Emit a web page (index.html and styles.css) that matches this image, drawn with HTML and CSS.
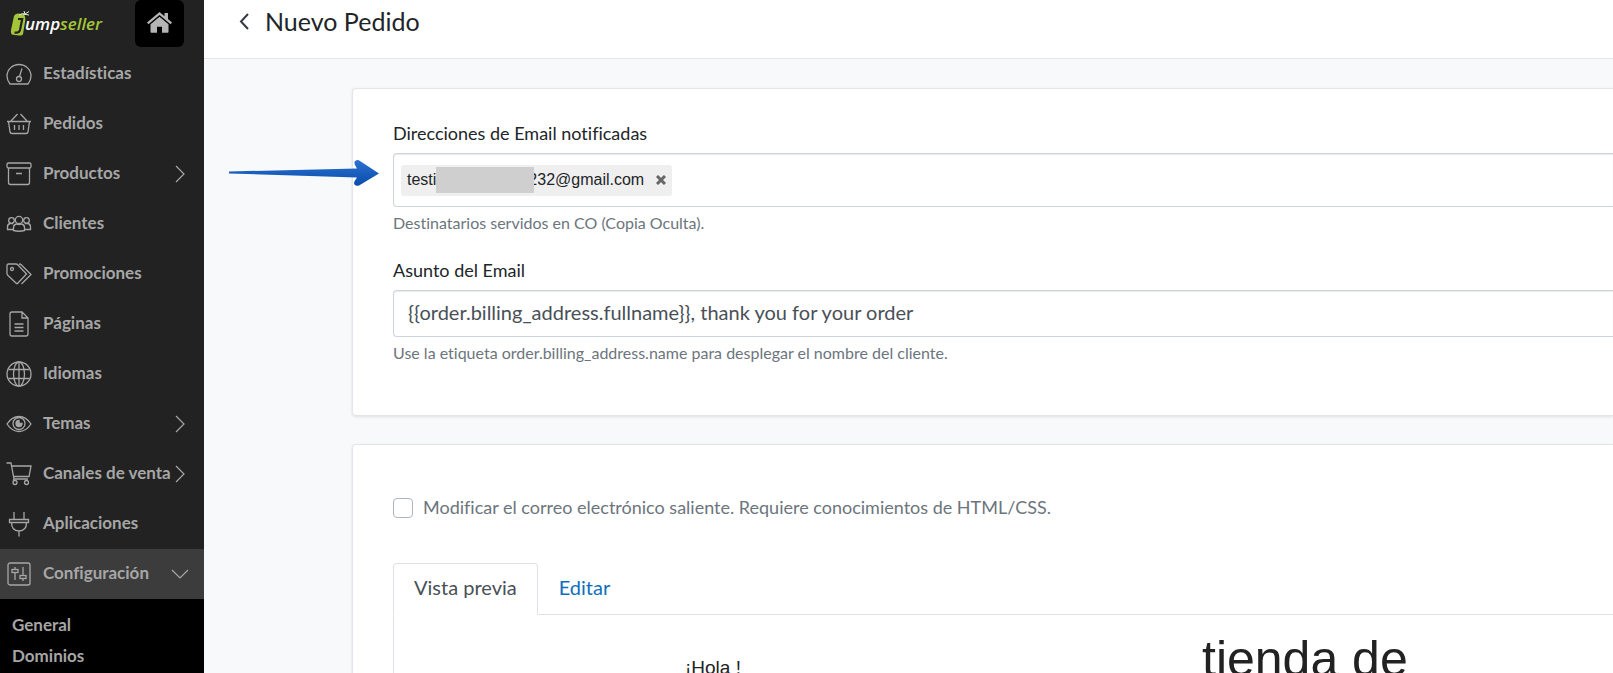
FILE: index.html
```html
<!DOCTYPE html>
<html lang="es">
<head>
<meta charset="utf-8">
<title>Nuevo Pedido</title>
<link rel="stylesheet" href="styles.css">
</head>
<body>
<div class="app">
  <aside class="sidebar">
    <div class="brand">
      <a class="logo" href="#" aria-label="jumpseller">
        <svg width="96" height="28" viewBox="0 0 96 28" aria-hidden="true">
          <path d="M4 6 Q5 3.500 8 3.500 L14 4.500 Q16 7 15 12 L13 24 Q12.500 26 9 25.500 L3 24.800 Q.5 24.500 1 20 Z" fill="#a3c639"/>
          <path d="M8 9h4.200L10 20q-1 3.500-5.500 2.500" fill="none" stroke="#222" stroke-width="2.200"/>
          <path d="M9 5q3-2 6-1l4-2.500M15 4l-1-3M13 4l6 1" fill="none" stroke="#e8efe0" stroke-width="1"/>
          <text class="logo-text" x="15" y="20"><tspan fill="#fff">ump</tspan><tspan fill="#a3c639">seller</tspan></text>
        </svg>
      </a>
      <a class="home" href="#" aria-label="Inicio">
        <svg width="25" height="21" viewBox="0 0 25 21" aria-hidden="true">
          <path d="M12.500 0 0 10.500l1.500 1.800 11-9.200 11 9.200 1.500-1.800-4-3.400V1h-3.500v3.200z"/>
          <path d="M12.500 4.800 3.500 12.300V20q0 .8.800.8h5.700v-6h5v6h5.700q.8 0 .8-.8v-7.700z"/>
        </svg>
      </a>
    </div>
    <nav class="menu">
      <a class="item" href="#"><svg class="icon" viewBox="0 0 26 26"><path d="M4 23h18q3-3.500 3-8a12 11.500 0 0 0-24 0q0 4.500 3 8zM13.500 15.500 16 7.500"/><circle cx="13" cy="18" r="2.500"/></svg><span>Estadísticas</span></a>
      <a class="item" href="#"><svg class="icon" viewBox="0 0 26 26"><path d="M1 10.500h24M2.500 10.500 4 21q.3 1.500 2 1.500h14q1.700 0 2-1.500l1.500-10.500M5 10l6.500-7M21 10l-6.500-7M8.500 14v5M13 14v5M17.500 14v5"/></svg><span>Pedidos</span></a>
      <a class="item" href="#"><svg class="icon" viewBox="0 0 26 26"><rect x="1" y="2" width="24" height="5" rx="1.500"/><path d="M2.500 7v14.500q0 2 2 2h17q2 0 2-2V7M10 12.500h6"/></svg><span>Productos</span><svg class="chevron" viewBox="0 0 18 18"><path d="m5 1 8 8-8 8"/></svg></a>
      <a class="item" href="#"><svg class="icon" viewBox="0 0 26 26"><circle cx="13" cy="9" r="3.700"/><circle cx="5.500" cy="9.500" r="2.800"/><circle cx="20.500" cy="9.500" r="2.800"/><path d="M7.500 19.500v-3q0-3 3-3.500 2.500 1 5 0 3 .5 3 3.500v3q-5.500 1.500-11 0zM7 18.500H1.500V16q0-3 2.500-3.500h3M19 18.500h5.500V16q0-3-2.500-3.500h-3"/></svg><span>Clientes</span></a>
      <a class="item" href="#"><svg class="icon" viewBox="0 0 26 26"><path d="M1 4.500q0-1.500 1.500-1.500H10q1 0 2 1l8.500 9-9 9.500q-.5.500-1 0L2 14.500q-1-1-1-2zM13 3q1.500 0 2.500 1l9.500 9.500-9.500 9.500"/><circle cx="6" cy="8" r="1.500"/></svg><span>Promociones</span></a>
      <a class="item" href="#"><svg class="icon" viewBox="0 0 26 26"><path d="M16 1H6Q4 1 4 3v20q0 2 2 2h14q2 0 2-2V7zM16 1v6h6M8.500 13h9M8.500 16.500h9M8.500 20h9"/></svg><span>Páginas</span></a>
      <a class="item" href="#"><svg class="icon" viewBox="0 0 26 26"><circle cx="13" cy="13" r="12"/><ellipse cx="13" cy="13" rx="5.500" ry="12"/><path d="M13 1v24M2.500 8.500h21M2.500 17.500h21"/></svg><span>Idiomas</span></a>
      <a class="item" href="#"><svg class="icon" viewBox="0 0 26 26"><path d="M1 13q5-7.500 12-7.500T25 13q-5 7.500-12 7.500T1 13z"/><circle cx="13" cy="12.500" r="6"/><path class="solid" d="M13 9.500a3 3 0 1 0 3 3h-3z"/></svg><span>Temas</span><svg class="chevron" viewBox="0 0 18 18"><path d="m5 1 8 8-8 8"/></svg></a>
      <a class="item" href="#"><svg class="icon" viewBox="0 0 26 26"><path d="M.5 2H5l3 16h14M6 5h19l-2 10.500H7.500M8 18l-1 1.500"/><circle cx="9" cy="21.500" r="2"/><circle cx="20.500" cy="21.500" r="2"/></svg><span>Canales de venta</span><svg class="chevron" viewBox="0 0 18 18"><path d="m5 1 8 8-8 8"/></svg></a>
      <a class="item" href="#"><svg class="icon" viewBox="0 0 26 26"><path d="M8 1v7M18 1v7M3.500 8.500h19v3h-19zM5.500 11.500q0 8.500 7.500 8.500t7.500-8.500M13 20v5.500"/></svg><span>Aplicaciones</span></a>
      <a class="item active" href="#"><svg class="icon" viewBox="0 0 26 26"><rect x="2" y="2" width="22" height="22" rx="2"/><path d="M9 6v2.500M9 12v7M17 6v8M17 18v2"/><rect x="6" y="8.500" width="6" height="3"/><rect x="14" y="14.500" width="6" height="3"/></svg><span>Configuración</span><svg class="chevron" viewBox="0 0 18 18"><path d="m1 5 8 8 8-8"/></svg></a>
    </nav>
    <nav class="submenu">
      <a href="#">General</a>
      <a href="#">Dominios</a>
    </nav>
  </aside>
  <div class="page">
    <header class="topbar">
      <button class="back" type="button" aria-label="Volver"><svg width="10" height="17" viewBox="0 0 10 17"><path d="M9 1 2 8.500 9 16"/></svg></button>
      <h1>Nuevo Pedido</h1>
    </header>
    <main class="content">
      <section class="card">
        <div class="field">
          <label for="emails">Direcciones de Email notificadas</label>
          <div class="tagbox">
            <span class="tag">testi<span class="mask"></span>232@gmail.com<button type="button" aria-label="Quitar"><svg width="10" height="10" viewBox="0 0 10 10"><path d="m1 1 8 8M9 1 1 9"/></svg></button></span>
            <input id="emails" type="text">
          </div>
          <p class="help">Destinatarios servidos en CO (Copia Oculta).</p>
          <svg class="pointer" width="152" height="28" viewBox="0 0 152 28" aria-hidden="true">
            <defs><linearGradient id="blue" x1="0" y1="0" x2="0" y2="1"><stop offset="0" stop-color="#2a72d0"/><stop offset="1" stop-color="#0a4bab"/></linearGradient></defs>
            <path d="M1 12.500 129 9.500 127 6Q125.500 2.500 128 1.500q2-1 4 .5l19 12.500L131 26.500q-3 1-4.500-1-1-2 .5-4l2-3L1 14.500z" fill="url(#blue)"/>
          </svg>
        </div>
        <div class="field">
          <label for="subject">Asunto del Email</label>
          <input class="control" id="subject" type="text" value="{{order.billing_address.fullname}}, thank you for your order">
          <p class="help">Use la etiqueta order.billing_address.name para desplegar el nombre del cliente.</p>
        </div>
      </section>
      <section class="card">
        <label class="check"><input type="checkbox"><span>Modificar el correo electrónico saliente. Requiere conocimientos de HTML/CSS.</span></label>
        <div class="tabs" role="tablist">
          <button class="tab selected" type="button" role="tab" aria-selected="true">Vista previa</button>
          <button class="tab" type="button" role="tab" aria-selected="false">Editar</button>
        </div>
        <div class="preview" role="tabpanel">
          <p class="greeting">¡Hola !</p>
          <p class="store">tienda de</p>
        </div>
      </section>
    </main>
  </div>
</div>
</body>
</html>
```
FILE: styles.css
```css
* { box-sizing: border-box; }
body { margin: 0; font-family: Lato, "Open Sans", sans-serif; font-variant-ligatures: none; color: #212529; background: #f8f9fb; }
h1, p { margin: 0; }
a { text-decoration: none; }
button { font: inherit; border: 0; background: none; padding: 0; }
svg { fill: none; flex: none; display: block; }

.app { display: flex; height: 100vh; overflow: hidden; }
.sidebar { width: 204px; flex: none; display: flex; flex-direction: column; background: #222; color: #a6a6a6; font-size: 17px; font-weight: 700; }
.brand { display: flex; justify-content: space-between; height: 49px; padding: 0 20px 0 10px; flex: none; }
.logo { padding-top: 10px; }
.logo-text { font: italic 600 17px "Open Sans", sans-serif; }
.home { display: grid; place-items: center; width: 49px; height: 47px; padding-bottom: 2px; background: #000; border-radius: 6px; }
.home svg { fill: #b5b5b5; }
.item { display: flex; align-items: center; height: 50px; padding: 0 15px 0 6px; color: inherit; }
.item span { padding: 0 0 3px 11px; white-space: nowrap; }
.item.active { background: #3c3c3c; }
.icon { width: 26px; height: 26px; stroke: currentColor; stroke-width: 1.3; }
.icon .solid { fill: currentColor; }
.chevron { width: 18px; height: 18px; margin-left: auto; stroke: currentColor; stroke-width: 1.2; }
.submenu { flex: 1; display: flex; flex-direction: column; padding: 10px 12px; background: #000; }
.submenu a { color: inherit; line-height: 31px; }

.page { flex: 1; min-width: 0; }
.topbar { display: flex; align-items: center; gap: 16px; height: 59px; padding: 0 35px 16px; background: #fff; border-bottom: 1px solid #e4e6e9; }
.back svg { stroke: #343a46; stroke-width: 2; }
h1 { font-size: 25px; font-weight: 400; }
.content { display: flex; flex-direction: column; gap: 28px; padding: 29px 0 0 148px; }
.card { padding: 31px 0 0 40px; background: #fff; border: 1px solid #e2e5e9; border-right: 0; border-radius: 4px 0 0 4px; box-shadow: 0 1px 3px rgba(0, 0, 0, .1); }
.card:first-child { padding-bottom: 51px; }
.field { position: relative; }
.field + .field { margin-top: 23px; }
.field label { display: block; margin-bottom: 7px; font-size: 18px; line-height: 26px; }
.tagbox, .control { width: 100%; border: 1px solid #ced4da; border-right: 0; border-radius: 4px 0 0 4px; background: #fff; box-shadow: inset 0 1px 1px rgba(0, 0, 0, .08); }
.tagbox { display: flex; align-items: center; height: 54px; padding: 0 7px; }
.tag { display: flex; align-items: center; height: 31px; padding: 0 6px; border-radius: 3px; background: #efefef; font-family: "Liberation Sans", Arial, sans-serif; font-size: 16px; }
.mask { width: 98px; height: 26px; margin-right: -6px; background: #cfcfcf; z-index: 1; }
.tag button { margin-left: 12px; }
.tag button svg { stroke: #666; stroke-width: 3; }
.tagbox input { flex: 1; min-width: 0; border: 0; outline: 0; background: none; }
.control { display: block; height: 47px; padding: 0 14px 4px; font-family: inherit; font-size: 20px; color: #495057; }
.help { margin-top: 5px; font-size: 16px; line-height: 22px; color: #6c757d; }
.pointer { position: absolute; left: -165px; top: 39px; }
.check { display: flex; align-items: center; gap: 10px; margin: 18px 0 41px; font-size: 18px; line-height: 26px; color: #6c757d; }
.check span { padding-bottom: 2px; }
.check input { appearance: none; width: 20px; height: 20px; margin: 0; border: 1px solid #adb5bd; border-radius: 4px; background: #fff; }
.tabs { display: flex; border-bottom: 1px solid #dee2e6; }
.tab { height: 52px; margin-bottom: -1px; padding: 0 20px 4px; border: 1px solid transparent; border-radius: 4px 4px 0 0; font-size: 20px; color: #0f6fbd; }
.tab.selected { color: #495057; background: #fff; border-color: #dee2e6 #dee2e6 #fff; }
.preview { display: grid; grid-template-columns: 517px 1fr; align-items: start; padding: 14px 0 0 291px; border-left: 1px solid #dee2e6; font-family: "Liberation Sans", Arial, sans-serif; color: #222; }
.greeting { padding-top: 27px; font-size: 19px; line-height: 24px; }
.store { font-size: 50px; line-height: 60px; }
```
